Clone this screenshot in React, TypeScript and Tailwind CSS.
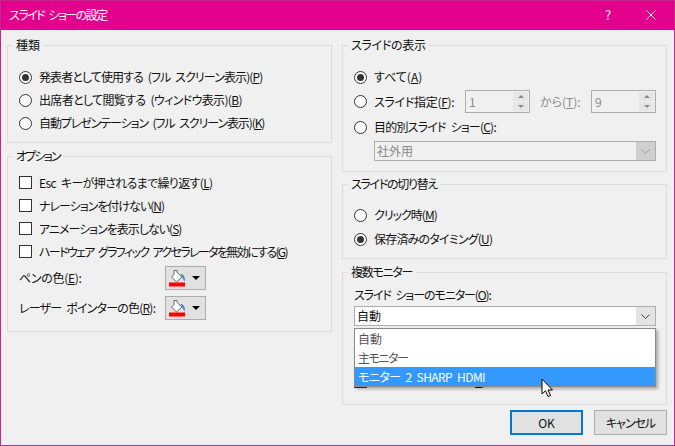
import React from 'react';

const font = "font-['Noto_Sans_CJK_JP',sans-serif] [font-feature-settings:'palt'] [word-spacing:3px]";

// label with underlined access key, e.g. "(P)"
function Key({ text, k, tail, className = '' }: { text: string; k: string; tail?: string; className?: string }) {
  return (
    <span className={`whitespace-nowrap ${className}`}>
      {text}(<span className="underline">{k}</span>){tail}
    </span>
  );
}

function Radio({ on, children }: { on?: boolean; children: React.ReactNode }) {
  return (
    <div className="flex items-center gap-[7px]">
      <div className="w-[13px] h-[13px] rounded-full border border-[#333] bg-white flex items-center justify-center shrink-0">
        {on && <div className="w-[7px] h-[7px] rounded-full bg-[#333]" />}
      </div>
      {children}
    </div>
  );
}

function Check({ children }: { children: React.ReactNode }) {
  return (
    <div className="flex items-center gap-[7px] h-[23px]">
      <div className="w-[13px] h-[13px] border border-[#333] bg-white shrink-0" />
      {children}
    </div>
  );
}

function Group({ title, className, legend = '', children }: { title: string; className: string; legend?: string; children: React.ReactNode }) {
  return (
    <fieldset className={`border border-[#dcdcdc] ${className}`}>
      <legend className={`ml-[5px] px-[3px] text-[12px] leading-[16px] ${legend}`}>{title}</legend>
      {children}
    </fieldset>
  );
}

function Chevron({ color }: { color: string }) {
  return (
    <svg width="9" height="5" viewBox="0 0 9 5">
      <path d="M0.5 0.5 L4.5 4.5 L8.5 0.5" fill="none" stroke={color} strokeWidth="1" />
    </svg>
  );
}

function Spin({ value }: { value: string }) {
  return (
    <div className="w-[65px] h-[23px] border border-[#adadad] flex items-center pl-[3px] pr-[1px] text-[#8a8a8a]">
      <span className="flex-1">{value}</span>
      <div className="flex flex-col w-[15px] h-[19px] gap-[1px]">
        {[0, 1].map((i) => (
          <div key={i} className="flex-1 bg-[#e6e6e6] flex items-center justify-center">
            <div
              className={
                i === 0
                  ? 'w-0 h-0 border-x-[3px] border-x-transparent border-b-[3px] border-b-[#8a8a8a]'
                  : 'w-0 h-0 border-x-[3px] border-x-transparent border-t-[3px] border-t-[#8a8a8a]'
              }
            />
          </div>
        ))}
      </div>
    </div>
  );
}

function ColorButton() {
  return (
    <div className="w-[41px] h-[24px] bg-[#e1e1e1] border border-[#adadad] flex items-center pl-[3px] gap-[5px]">
      <svg width="18" height="18" viewBox="0 0 18 18">
        <path d="M5 1.5 H8 V3.5 L13 8 L7.5 13 L2.5 8 L5 5.5 Z" fill="#fff" stroke="#666" strokeWidth="1" />
        <path d="M11.5 5 C14.5 5 16 7.5 16 12 C15 12 14.5 11 14 9.5 Z" fill="#4f81bd" />
        <rect x="0" y="13.5" width="16" height="4" fill="#ff0000" />
      </svg>
      <div className="w-0 h-0 border-x-[4px] border-x-transparent border-t-[4px] border-t-black" />
    </div>
  );
}

export default function App() {
  return (
    <div className={`w-[675px] h-[446px] overflow-hidden flex flex-col bg-[#f0f0f0] border border-[#c2278c] text-[12px] leading-[16px] text-[#111] relative ${font}`}>
      {/* title bar */}
      <div className="h-[30px] -mx-[1px] -mt-[1px] pb-[1px] shrink-0 bg-[#e3008c] text-white flex items-center pl-[9px]">
        <span className="flex-1 tracking-[-1.5px]">スライド ショーの設定</span>
        <span className="w-[12px] text-[13px]">?</span>
        <div className="w-[58px] flex justify-center pl-[10px]">
          <svg width="10" height="10" viewBox="0 0 10 10">
            <path d="M0.5 0.5 L9.5 9.5 M9.5 0.5 L0.5 9.5" stroke="#fff" strokeWidth="1" />
          </svg>
        </div>
      </div>

      <div className="flex gap-[10px] px-[6px] pt-[7px]">
        {/* left column */}
        <div className="w-[325px] flex flex-col gap-[5px]">
          <Group title="種類" className="h-[106px]">
            <div className="flex flex-col gap-[7px] pl-[11px] pt-[16px]">
              <Radio on><Key className="tracking-[-0.9px]" text="発表者として使用する (フル スクリーン表示)" k="P" /></Radio>
              <Radio><Key className="tracking-[-0.65px]" text="出席者として閲覧する (ウィンドウ表示)" k="B" /></Radio>
              <Radio><Key className="tracking-[-1.1px]" text="自動プレゼンテーション (フル スクリーン表示)" k="K" /></Radio>
            </div>
          </Group>
          <Group title="オプション" legend="tracking-[-1.8px]" className="h-[184px]">
            <div className="flex flex-col pl-[11px] pt-[7px]">
              <Check><Key className="tracking-[-0.65px]" text="Esc キーが押されるまで繰り返す" k="L" /></Check>
              <Check><Key className="tracking-[-1px]" text="ナレーションを付けない" k="N" /></Check>
              <Check><Key className="tracking-[-1px]" text="アニメーションを表示しない" k="S" /></Check>
              <Check><Key className="tracking-[-1.65px]" text="ハードウェア グラフィック アクセラレータを無効にする" k="G" /></Check>
              <div className="flex items-center h-[24px] mt-[3px]">
                <div className="w-[146px]"><Key className="tracking-[-0.3px]" text="ペンの色" k="E" tail=":" /></div>
                <ColorButton />
              </div>
              <div className="flex items-center h-[24px] mt-[6px]">
                <div className="w-[146px]"><Key className="tracking-[-0.8px]" text="レーザー ポインターの色" k="R" tail=":" /></div>
                <ColorButton />
              </div>
            </div>
          </Group>
        </div>

        {/* right column */}
        <div className="w-[325px] flex flex-col gap-[4px]">
          <Group title="スライドの表示" legend="tracking-[-0.3px]" className="h-[135px]">
            <div className="flex flex-col pl-[11px] pr-[10px] pt-[16px]">
              <Radio on><Key text="すべて" k="A" /></Radio>
              <div className="flex items-center mt-[5px] h-[23px]">
                <Radio><div className="w-[91px]"><Key className="tracking-[-0.3px]" text="スライド指定" k="F" tail=":" /></div></Radio>
                <Spin value="1" />
                <div className="w-[61px] pl-[10px] text-[#8a8a8a]"><Key text="から" k="T" tail=":" /></div>
                <Spin value="9" />
              </div>
              <div className="mt-[6px]">
                <Radio><Key className="tracking-[-0.8px]" text="目的別スライド ショー" k="C" tail=":" /></Radio>
              </div>
              <div className="ml-[20px] mt-[6px] h-[20px] border border-[#adadad] flex items-center pl-[2px] text-[#8a8a8a]">
                <span className="flex-1">社外用</span>
                <div className="w-[19px] h-full bg-[#cfcfcf] flex items-center justify-center">
                  <Chevron color="#9a9a9a" />
                </div>
              </div>
            </div>
          </Group>
          <Group title="スライドの切り替え" legend="tracking-[-1.3px]" className="h-[83px]">
            <div className="flex flex-col gap-[8px] pl-[11px] pt-[15px]">
              <Radio><Key className="tracking-[-1px]" text="クリック時" k="M" /></Radio>
              <Radio on><Key className="tracking-[-0.8px]" text="保存済みのタイミング" k="U" /></Radio>
            </div>
          </Group>
          <Group title="複数モニター" legend="tracking-[-1.3px]" className="h-[141px] mt-[1px]">
            <div className="flex flex-col pl-[11px] pr-[10px] pt-[7px]">
              <Key className="tracking-[-1.1px]" text="スライド ショーのモニター" k="O" tail=":" />
              <div className="mt-[3px] h-[20px] bg-white border border-[#adadad] flex items-center pl-[2px]">
                <span className="flex-1">自動</span>
                <div className="w-[19px] h-full bg-[#e3e3e3] flex items-center justify-center">
                  <Chevron color="#444" />
                </div>
              </div>
              <div className="mt-[47px] flex items-center gap-[7px]">
                <div className="w-[13px] h-[13px] border border-[#333] bg-white shrink-0" />
                <Key className="tracking-[-0.8px]" text="発表者ツールの使用" k="V" />
              </div>
            </div>
          </Group>
          <div className="flex justify-end gap-[11px] mt-[1px]">
            <div className="w-[73px] h-[25px] bg-[#e1e1e1] border-2 border-[#0078d7] flex items-center justify-center">OK</div>
            <div className="w-[73px] h-[25px] bg-[#e1e1e1] border border-[#adadad] flex items-center justify-center tracking-[-1px]">キャンセル</div>
          </div>
        </div>
      </div>

      {/* open dropdown list */}
      <div className="absolute left-[353px] top-[327px] w-[302px] h-[59px] bg-white border border-[#8a8a8a] shadow-[2px_2px_3px_rgba(0,0,0,0.3)] flex flex-col">
        <div className="h-[19px] pl-[3px] flex items-center text-[#555]">自動</div>
        <div className="h-[19px] pl-[3px] flex items-center text-[#555] tracking-[-1.5px]">主モニター</div>
        <div className="h-[19px] pl-[3px] flex items-center bg-[#3399ff] text-white tracking-[-0.6px]">モニター 2 SHARP HDMI</div>
      </div>

      {/* mouse pointer */}
      <svg className="absolute left-[540px] top-[377px]" width="14" height="21" viewBox="0 0 14 21">
        <path d="M1 1 V16 L4.5 12.8 L7 18.5 L9.5 17.5 L7 12 H11.5 Z" fill="#fff" stroke="#000" strokeWidth="1" />
      </svg>
    </div>
  );
}
